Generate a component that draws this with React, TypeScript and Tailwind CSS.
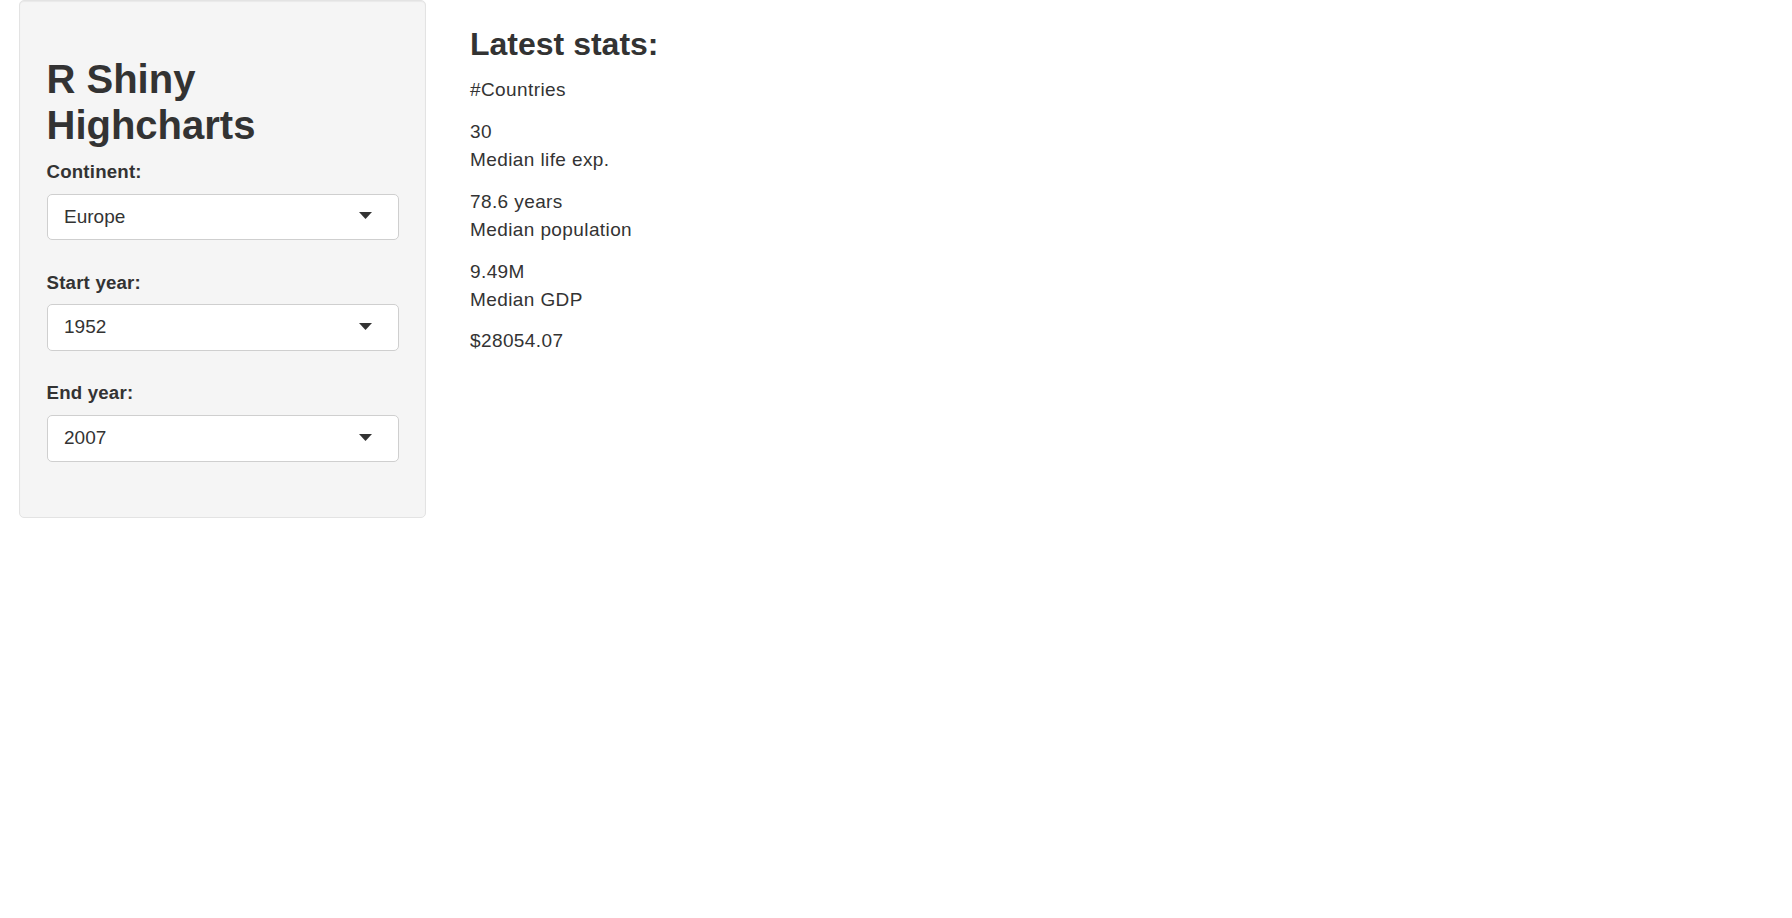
const FONT = "font-['Liberation_Sans',Arial,Helvetica,sans-serif]";

const inputs = [
  { label: "Continent:", value: "Europe" },
  { label: "Start year:", value: "1952" },
  { label: "End year:", value: "2007" },
];

const stats = [
  { label: "#Countries", value: "30" },
  { label: "Median life exp.", value: "78.6 years" },
  { label: "Median population", value: "9.49M" },
  { label: "Median GDP", value: "$28054.07" },
];

function Caret() {
  return (
    <svg width="13" height="7" viewBox="0 0 13 7" className="mt-[-2px]">
      <path d="M0 0 L13 0 L6.5 7 Z" fill="#333" />
    </svg>
  );
}

function SelectInput({ label, value }: { label: string; value: string }) {
  return (
    <div className="mb-[29.5px]">
      <label className="block text-[18.67px] leading-[26.67px] font-bold tracking-[0.2px] mb-[8px]">{label}</label>
      <div className="h-[46.5px] w-full bg-white border border-[#cfcfcf] rounded-[5px] flex items-center justify-between pl-[16.5px] pr-[26px]">
        <span className="text-[19px] leading-[26.67px]">{value}</span>
        <Caret />
      </div>
    </div>
  );
}

export default function App() {
  return (
    <div className={`${FONT} min-h-screen bg-white text-[#333] flex items-start pl-[19px]`}>
      {/* Sidebar well */}
      <div className="w-[407px] shrink-0 bg-[#f5f5f5] border border-[#e3e3e3] rounded-[5px] shadow-[inset_0_1px_1px_rgba(0,0,0,0.05)] px-[26.5px] pt-[54.5px] pb-[26px]">
        <h2 className="text-[40px] leading-[46.5px] font-bold mb-[10.5px]">
          R Shiny
          <br />
          Highcharts
        </h2>
        {inputs.map((i) => (
          <SelectInput key={i.label} label={i.label} value={i.value} />
        ))}
      </div>

      {/* Main panel */}
      <div className="ml-[44px] pt-[26.8px]">
        <h3 className="text-[32px] leading-[35.2px] font-bold mb-[14.2px]">Latest stats:</h3>
        {stats.map((s) => (
          <div key={s.label} className="text-[19px] leading-[28.3px] tracking-[0.4px]">
            <p className="mb-[13.3px]">{s.label}</p>
            <div>{s.value}</div>
          </div>
        ))}
      </div>
    </div>
  );
}
